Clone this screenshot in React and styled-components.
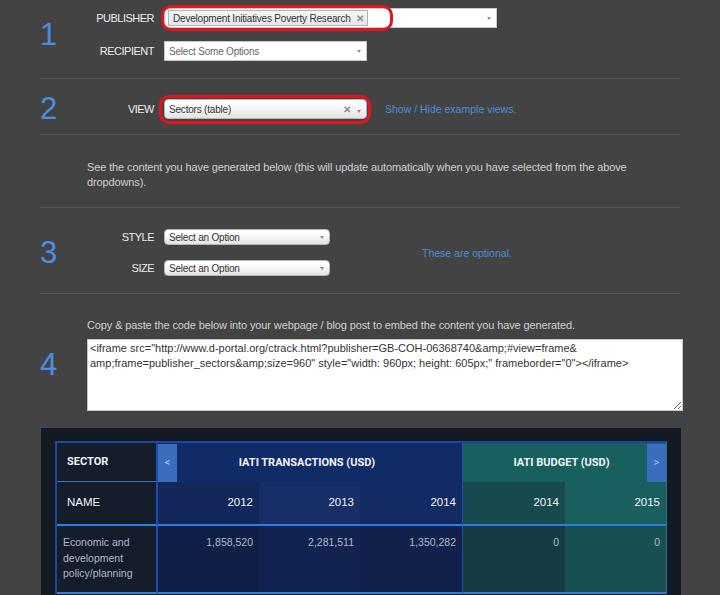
import styled, { createGlobalStyle } from "styled-components";

const GlobalStyle = createGlobalStyle`
  html, body {
    margin: 0;
    background: #434343;
    overflow: hidden;
  }
  body {
    font-family: "Liberation Sans", Arial, sans-serif;
    color: #e8e8e8;
  }
`;

const Page = styled.div`
  width: 640px;
  margin-left: 40px;
  height: 595px;
`;

// one numbered block of the builder, separated by a thin rule
const Section = styled.section`
  display: grid;
  grid-template-columns: 47px 1fr;
  align-items: center;
  padding: ${(p) => p.$pad};
  border-bottom: ${(p) => (p.$last ? "none" : "1px solid #575757")};
`;

const Step = styled.div`
  font-size: 31px;
  line-height: 16px;
  color: #4a90e2;
`;

const Body = styled.div`
  grid-column: 2;
  display: flex;
  align-items: ${(p) => (p.$row ? "center" : "stretch")};
  flex-direction: ${(p) => (p.$row ? "row" : "column")};
  gap: ${(p) => p.$gap || 0}px;
`;

const Fields = styled.div`
  display: flex;
  flex-direction: column;
  gap: ${(p) => p.$gap}px;
`;

const Field = styled.div`
  display: flex;
  align-items: center;
  gap: 10px;
`;

const Label = styled.span`
  width: 67px;
  text-align: right;
  font-size: 11px;
  letter-spacing: -0.5px;
  color: #ececec;
`;

const Select = styled.div`
  position: relative;
  box-sizing: border-box;
  width: ${(p) => p.$w}px;
  height: ${(p) => p.$h}px;
  display: flex;
  align-items: center;
  padding: 0 5px 0 4px;
  background: ${(p) =>
    p.$round ? "linear-gradient(#ffffff 20%, #f4f4f4 55%, #e2e2e2)" : "#fff"};
  border: 1px solid ${(p) => (p.$round ? "#b5b5b5" : "#c8c8c8")};
  border-radius: ${(p) => (p.$round ? "4px" : "0")};
  font-size: 10px;
  letter-spacing: -0.2px;
  color: ${(p) => (p.$muted ? "#666" : "#333")};
`;

const Chip = styled.span`
  display: inline-flex;
  align-items: center;
  gap: 5px;
  height: 14px;
  padding: 0 4px;
  margin-left: -1px;
  background: linear-gradient(#f6f6f6, #e6e6e6);
  border: 1px solid #b4b4b4;
  font-size: 10px;
  color: #333;
`;

const Close = styled.span`
  font-size: 10px;
  font-weight: 700;
  color: #8a8a8a;
  margin-left: ${(p) => (p.$push ? "auto" : "0")};
`;

const Caret = styled.span`
  margin-left: ${(p) => (p.$tight ? "6px" : "auto")};
  margin-top: ${(p) => (p.$low ? "5px" : "0")};
  width: 0;
  height: 0;
  border-left: 2.5px solid transparent;
  border-right: 2.5px solid transparent;
  border-top: 3px solid #8c8c8c;
`;

// hand-drawn red highlight laid over a dropdown
const Highlight = styled.span`
  position: absolute;
  box-sizing: border-box;
  top: ${(p) => p.$t}px;
  left: ${(p) => p.$l}px;
  width: ${(p) => p.$w}px;
  height: ${(p) => p.$h}px;
  border: 3px solid #e2141d;
  border-radius: 10px;
  pointer-events: none;
`;

const Link = styled.a`
  margin-left: 18px;
  font-size: 10.5px;
  color: #4a8fda;
  text-decoration: none;
`;

const Note = styled.p`
  margin: 0;
  max-width: 560px;
  font-size: 11px;
  letter-spacing: -0.12px;
  line-height: 15px;
  color: #d0d0d0;
`;

const Optional = styled.span`
  margin-left: 92px;
  font-size: 10.5px;
  color: #4a8fda;
`;

const Code = styled.textarea`
  box-sizing: border-box;
  width: 596px;
  height: 72px;
  margin: 0;
  padding: 1px 2px;
  border: 1px solid #c6c6c6;
  background: #fff;
  font-family: "Liberation Sans", Arial, sans-serif;
  font-size: 11px;
  line-height: 15px;
  color: #333;
  outline: none;
`;

const Embed = styled.div`
  margin-left: 1px;
  width: 640px;
  background: #141a23;
  padding: 13px 14px 0 14px;
  box-sizing: border-box;
  height: 170px;
`;

const Grid = styled.div`
  display: grid;
  grid-template-columns: 101px 101px 101px 103px 102px 101px;
  border-left: 2px solid #1a47a5;
  border-top: 2px solid #1a47a5;
  border-right: 1px solid #2a7388;
  width: max-content;
`;

const Cell = styled.div`
  position: relative;
  box-sizing: border-box;
  grid-column: span ${(p) => p.$span || 1};
  height: ${(p) => p.$h}px;
  display: flex;
  align-items: ${(p) => (p.$top ? "flex-start" : "center")};
  justify-content: ${(p) =>
    p.$center ? "center" : p.$left ? "flex-start" : "flex-end"};
  padding: ${(p) => (p.$top ? "9px 6px 0 6px" : p.$left ? "0 0 0 10px" : "0 6px 0 0")};
  background: ${(p) => p.$bg};
  border-right: ${(p) => p.$br || "none"};
  border-bottom: ${(p) => p.$bb || "none"};
  font-size: ${(p) => (p.$head ? "11px" : p.$value ? "10.5px" : "11.5px")};
  font-weight: ${(p) => (p.$head ? 700 : 400)};
  font-family: ${(p) => (p.$head ? "Roboto, 'Liberation Sans', sans-serif" : "inherit")};
  color: ${(p) => (p.$value ? "#aeb8c8" : "#f2f4f8")};
  line-height: 15.5px;
`;

const Pager = styled.span`
  position: absolute;
  top: 1px;
  bottom: 0;
  ${(p) => (p.$right ? "right: 0;" : "left: 0;")}
  width: 19px;
  display: flex;
  align-items: center;
  justify-content: center;
  background: #3a6dbb;
  color: #a9c6ec;
  font-size: 11px;
  font-weight: 400;
`;

const SECTOR_BG = "#151c2a";
const SPLIT = "2px solid #1b4cb0";
const RULE = "2px solid #2b7fe2";

const years = [
  { label: "2012", value: "1,858,520", head: "#13275b", row: "#111f47" },
  { label: "2013", value: "2,281,511", head: "#172e67", row: "#13234f" },
  { label: "2014", value: "1,350,282", head: "#142a62", row: "#12214c", br: "1px solid #1d4db2" },
  { label: "2014", value: "0", head: "#164a4f", row: "#153b42" },
  { label: "2015", value: "0", head: "#1a5f60", row: "#184f52" },
];

const App = () => {
  return (
    <>
      <GlobalStyle />
      <Page>
        <Section $pad="8px 0 17px">
          <Step>1</Step>
          <Body>
            <Fields $gap={13}>
              <Field>
                <Label>PUBLISHER</Label>
                <Select $w={333} $h={20}>
                  <Chip>
                    Development Initiatives Poverty Research <Close>✕</Close>
                  </Chip>
                  <Caret />
                  <Highlight $t={-4} $l={-4} $w={232} $h={26} />
                </Select>
              </Field>
              <Field>
                <Label>RECIPIENT</Label>
                <Select $w={203} $h={20} $muted>
                  Select Some Options
                  <Caret />
                </Select>
              </Field>
            </Fields>
          </Body>
        </Section>

        <Section $pad="20px 0 15px">
          <Step>2</Step>
          <Body $row>
            <Field>
              <Label>VIEW</Label>
              <Select $w={203} $h={20} $round>
                Sectors (table)
                <Close $push>✕</Close>
                <Caret $tight $low />
                <Highlight $t={-5} $l={-6} $w={212} $h={29} />
              </Select>
            </Field>
            <Link href="#">Show / Hide example views.</Link>
          </Body>
        </Section>

        <Section $pad="25px 0 17px">
          <Body>
            <Note>
              See the content you have generated below (this will update automatically when you
              have selected from the above dropdowns).
            </Note>
          </Body>
        </Section>

        <Section $pad="21px 0 17px">
          <Step>3</Step>
          <Body $row>
            <Fields $gap={15}>
              <Field>
                <Label>STYLE</Label>
                <Select $w={166} $h={16} $round>
                  Select an Option
                  <Caret />
                </Select>
              </Field>
              <Field>
                <Label>SIZE</Label>
                <Select $w={166} $h={16} $round>
                  Select an Option
                  <Caret />
                </Select>
              </Field>
            </Fields>
            <Optional>These are optional.</Optional>
          </Body>
        </Section>

        <Section $pad="24px 0 17px" $last>
          <Step>4</Step>
          <Body $gap={6}>
            <Note>
              Copy &amp; paste the code below into your webpage / blog post to embed the content you
              have generated.
            </Note>
            <Code
              readOnly
              spellCheck={false}
              value={
                '<iframe src="http://www.d-portal.org/ctrack.html?publisher=GB-COH-06368740&amp;#view=frame&\namp;frame=publisher_sectors&amp;size=960" style="width: 960px; height: 605px;" frameborder="0"></iframe>'
              }
            />
          </Body>
        </Section>

        <Embed>
          <Grid>
            <Cell $h={39} $left $head $bg={SECTOR_BG} $br={SPLIT} $bb="1px solid #3674c9">
              SECTOR
            </Cell>
            <Cell $span={3} $h={39} $center $head $bg="#112b67" $br="1px solid #1d4db2">
              <Pager>&lt;</Pager>
              IATI TRANSACTIONS (USD)
            </Cell>
            <Cell $span={2} $h={39} $center $head $bg="#17605f">
              IATI BUDGET (USD)
              <Pager $right>&gt;</Pager>
            </Cell>

            <Cell $h={44} $left $bg={SECTOR_BG} $br={SPLIT} $bb={RULE}>
              NAME
            </Cell>
            {years.map((y, i) => (
              <Cell key={"h" + i} $h={44} $bg={y.head} $br={y.br} $bb={RULE}>
                {y.label}
              </Cell>
            ))}

            <Cell $h={68} $top $left $value $bg={SECTOR_BG} $br={SPLIT} $bb={RULE}>
              Economic and
              <br />
              development
              <br />
              policy/planning
            </Cell>
            {years.map((y, i) => (
              <Cell key={"v" + i} $h={68} $top $value $bg={y.row} $br={y.br} $bb={RULE}>
                <span style={{ marginLeft: "auto" }}>{y.value}</span>
              </Cell>
            ))}
          </Grid>
        </Embed>
      </Page>
    </>
  );
};

export default App;
